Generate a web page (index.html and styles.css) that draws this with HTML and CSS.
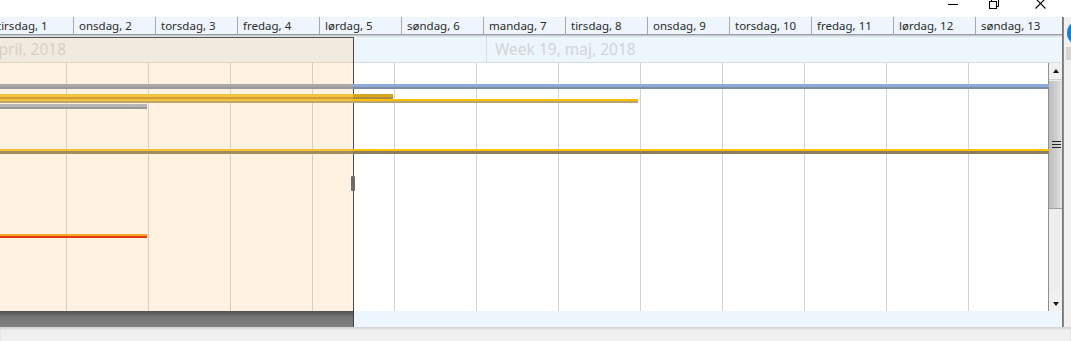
FILE: index.html
```html
<!DOCTYPE html>
<html>
<head>
<meta charset="utf-8">
<link rel="stylesheet" href="styles.css">
</head>
<body>
<div class="titlebar">
  <svg class="ico ico-min" width="10" height="10" viewBox="0 0 10 10"><line x1="0" y1="5.5" x2="10" y2="5.5" stroke="#000" stroke-width="1"/></svg>
  <svg class="ico ico-max" width="10" height="10" viewBox="0 0 10 10"><rect x="0.5" y="2.5" width="7" height="7" fill="none" stroke="#000"/><polyline points="2.5,2.5 2.5,0.5 9.5,0.5 9.5,7.5 7.5,7.5" fill="none" stroke="#000"/></svg>
  <svg class="ico ico-close" width="11" height="11" viewBox="0 0 11 11"><path d="M0.5 0.5 L10.5 10.5 M10.5 0.5 L0.5 10.5" stroke="#000" stroke-width="1.1"/></svg>
</div>
<div class="window">
  <div class="chart">
    <div class="header">
      <div class="day">tirsdag, 1</div>
      <div class="day">onsdag, 2</div>
      <div class="day">torsdag, 3</div>
      <div class="day">fredag, 4</div>
      <div class="day">lørdag, 5</div>
      <div class="day">søndag, 6</div>
      <div class="day">mandag, 7</div>
      <div class="day">tirsdag, 8</div>
      <div class="day">onsdag, 9</div>
      <div class="day">torsdag, 10</div>
      <div class="day">fredag, 11</div>
      <div class="day">lørdag, 12</div>
      <div class="day">søndag, 13</div>
    </div>
    <div class="weekrow">
      <div class="week">Week 18, april, 2018</div>
      <div class="week">Week 19, maj, 2018</div>
    </div>
    <div class="body">
      <div class="grid">
        <div class="bar bar-summary" style="width:1049px"></div>
        <div class="bar bar-gold" style="width:393px"></div>
        <div class="bar bar-yellow" style="width:638px"></div>
        <div class="bar bar-gray" style="width:147px"></div>
        <div class="bar bar-long" style="width:1049px"></div>
        <div class="bar bar-red" style="width:147px"></div>
      </div>
      <div class="vscroll">
        <div class="sbtn sbtn-up"><span class="arrow-up"></span></div>
        <div class="thumb"><span class="grip"></span></div>
        <div class="track"></div>
        <div class="sbtn sbtn-down"><span class="arrow-down"></span></div>
      </div>
    </div>
    <div class="footer"><div class="footer-dark"></div></div>
    <div class="overlay"></div>
    <div class="splitter"></div>
  </div>
  <div class="side">
    <div class="side-circle"></div>
    <div class="side-block"></div>
  </div>
</div>
<div class="status"></div>
</body>
</html>
```
FILE: styles.css
```css
html, body {
  margin: 0;
  padding: 0;
  width: 1071px;
  height: 341px;
  overflow: hidden;
  background: #ffffff;
  font-family: "Noto Sans", "Open Sans", sans-serif;
}

.titlebar {
  height: 17px;
  display: flex;
  justify-content: flex-end;
  align-items: flex-start;
  padding-right: 25px;
  background: #ffffff;
  overflow: hidden;
}
.ico { display: block; }
.ico-min { margin-top: -1px; }
.ico-max { margin-left: 31px; margin-top: -1px; }
.ico-close { margin-left: 36px; margin-top: -2px; }

.window {
  display: flex;
  height: 310px;
}

.chart {
  position: relative;
  width: 1063px;
  flex: 0 0 1063px;
  display: flex;
  flex-direction: column;
  overflow: hidden;
}

.header {
  position: relative;
  z-index: 3;
  height: 17px;
  display: flex;
  margin-left: -8px;
  background: #eef5fc;
  border-bottom: 1px solid #9c9c9c;
  box-shadow: 0 1px 2px rgba(0,0,0,0.25);
  border-right: 1px solid #777;
}
.day {
  flex: 0 0 82px;
  box-sizing: border-box;
  border-right: 1px solid #a8a8a8;
  padding-left: 5px;
  font-size: 11.5px;
  line-height: 17px;
  color: #2b2b2b;
  white-space: nowrap;
}
.day:last-child { border-right: none; flex: 1 1 auto; }

.weekrow {
  height: 27px;
  display: flex;
  margin-left: -88px;
  background: #eef6fd;
  border-bottom: 1px solid #d6dce3;
  border-right: 1px solid #777;
}
.week {
  flex: 0 0 574px;
  box-sizing: border-box;
  border-left: 1px solid #d9dee4;
  padding-left: 8px;
  font-size: 15.5px;
  line-height: 29px;
  color: #d2d4d7;
  white-space: nowrap;
}
.week:first-child { border-left: none; }

.body {
  height: 248px;
  display: flex;
}
.grid {
  position: relative;
  width: 1048px;
  flex: 0 0 1048px;
  background:
    repeating-linear-gradient(90deg, transparent 0 66px, #d2d2d2 66px 67px, transparent 67px 82px),
    #ffffff;
}

.bar {
  position: absolute;
  left: 0;
  z-index: 2;
}
.bar-summary {
  top: 21px;
  height: 5px;
  background:
    linear-gradient(90deg, #a9a9a9 0 353px, #8eaadb 353px) top / 100% 3px no-repeat,
    linear-gradient(90deg, #999999 0 353px, #7d8ca2 353px) bottom / 100% 2px no-repeat;
}
.bar-gold {
  top: 31px;
  height: 5px;
  background:
    linear-gradient(90deg, #f6c340 0 353px, #d6a622 353px) top / 100% 3px no-repeat,
    linear-gradient(90deg, #c99f3e 0 353px, #a88b3c 353px) bottom / 100% 2px no-repeat;
}
.bar-yellow {
  top: 36px;
  height: 4px;
  background:
    linear-gradient(90deg, #f7c23f 0 353px, #ffc000 353px) top / 100% 2px no-repeat,
    linear-gradient(90deg, #c2a568 0 353px, #b8a46e 353px) bottom / 100% 2px no-repeat;
}
.bar-gray {
  top: 41px;
  height: 5px;
  background:
    linear-gradient(#b6b6b6, #b6b6b6) top / 100% 3px no-repeat,
    linear-gradient(#999999, #999999) bottom / 100% 2px no-repeat;
}
.bar-long {
  top: 86px;
  height: 5px;
  background:
    linear-gradient(90deg, #f7c12e 0 353px, #ffc000 353px) top / 100% 2px no-repeat,
    linear-gradient(90deg, #a08d62 0 353px, #8c7f60 353px) bottom / 100% 3px no-repeat;
}
.bar-red {
  top: 171px;
  height: 4px;
  background:
    linear-gradient(#f6a82a, #f6a82a) top / 100% 2px no-repeat,
    linear-gradient(#e2380c, #e2380c) bottom / 100% 2px no-repeat;
}

.vscroll {
  width: 15px;
  flex: 0 0 15px;
  box-sizing: border-box;
  border-left: 1px solid #8f8f8f;
  border-right: 1px solid #7a7a7a;
  background: #eeeeee;
  display: flex;
  flex-direction: column;
}
.sbtn {
  display: flex;
  align-items: center;
  justify-content: center;
  background: #f0f0f0;
}
.sbtn-up {
  height: 16px;
  border-bottom: 1px solid #d0d0d0;
}
.sbtn-down {
  height: 21px;
  align-items: flex-end;
  padding-bottom: 5px;
  box-sizing: border-box;
}
.arrow-up {
  width: 0; height: 0;
  border-left: 3.5px solid transparent;
  border-right: 3.5px solid transparent;
  border-bottom: 4px solid #111;
}
.arrow-down {
  width: 0; height: 0;
  border-left: 3.5px solid transparent;
  border-right: 3.5px solid transparent;
  border-top: 4px solid #111;
}
.thumb {
  margin-top: 1px;
  height: 127px;
  background: linear-gradient(90deg, #bdbdbd 0, #cfcfcf 55%, #e3e3e3 100%);
  border-bottom: 1px solid #a0a0a0;
  display: flex;
  align-items: center;
  justify-content: center;
}
.grip {
  width: 9px;
  height: 5px;
  border-top: 1px solid #222;
  border-bottom: 1px solid #222;
  background: linear-gradient(#222, #222) center / 100% 1px no-repeat;
  margin-left: 1px;
}
.track { flex: 1 1 auto; background: #eeeeee; }

.footer {
  height: 16px;
  background: #eef6fd;
  display: flex;
  border-right: 1px solid #777;
}
.footer-dark {
  width: 353px;
  border-right: 1px solid #3e3e3e;
  background: linear-gradient(#505050 0, #747474 35%, #808080 100%);
}

.overlay {
  position: absolute;
  left: 0;
  top: 20px;
  width: 353px;
  height: 273px;
  background: rgba(255, 190, 100, 0.2);
  border-top: 1px solid #555;
  border-right: 1px solid #4a4a4a;
  z-index: 1;
}
.splitter {
  position: absolute;
  left: 351px;
  top: 159px;
  width: 4px;
  height: 15px;
  background: #6b6b6b;
  border-radius: 1px;
  z-index: 4;
}

.side {
  position: relative;
  flex: 0 0 8px;
  background: #f0f0f0;
  overflow: hidden;
  border-left: 1px solid #8a8a8a;
  box-sizing: border-box;
}
.side-circle {
  position: absolute;
  left: 3px;
  top: 3px;
  width: 26px;
  height: 26px;
  border-radius: 50%;
  background: #1a7fcf;
}
.side-block {
  position: absolute;
  left: 2px;
  top: 30px;
  width: 6px;
  height: 13px;
  background: #d4d4d4;
}

.status {
  height: 14px;
  background: #f0f0f0;
  box-shadow: inset 0 2px 2px rgba(0,0,0,0.12);
}
```
